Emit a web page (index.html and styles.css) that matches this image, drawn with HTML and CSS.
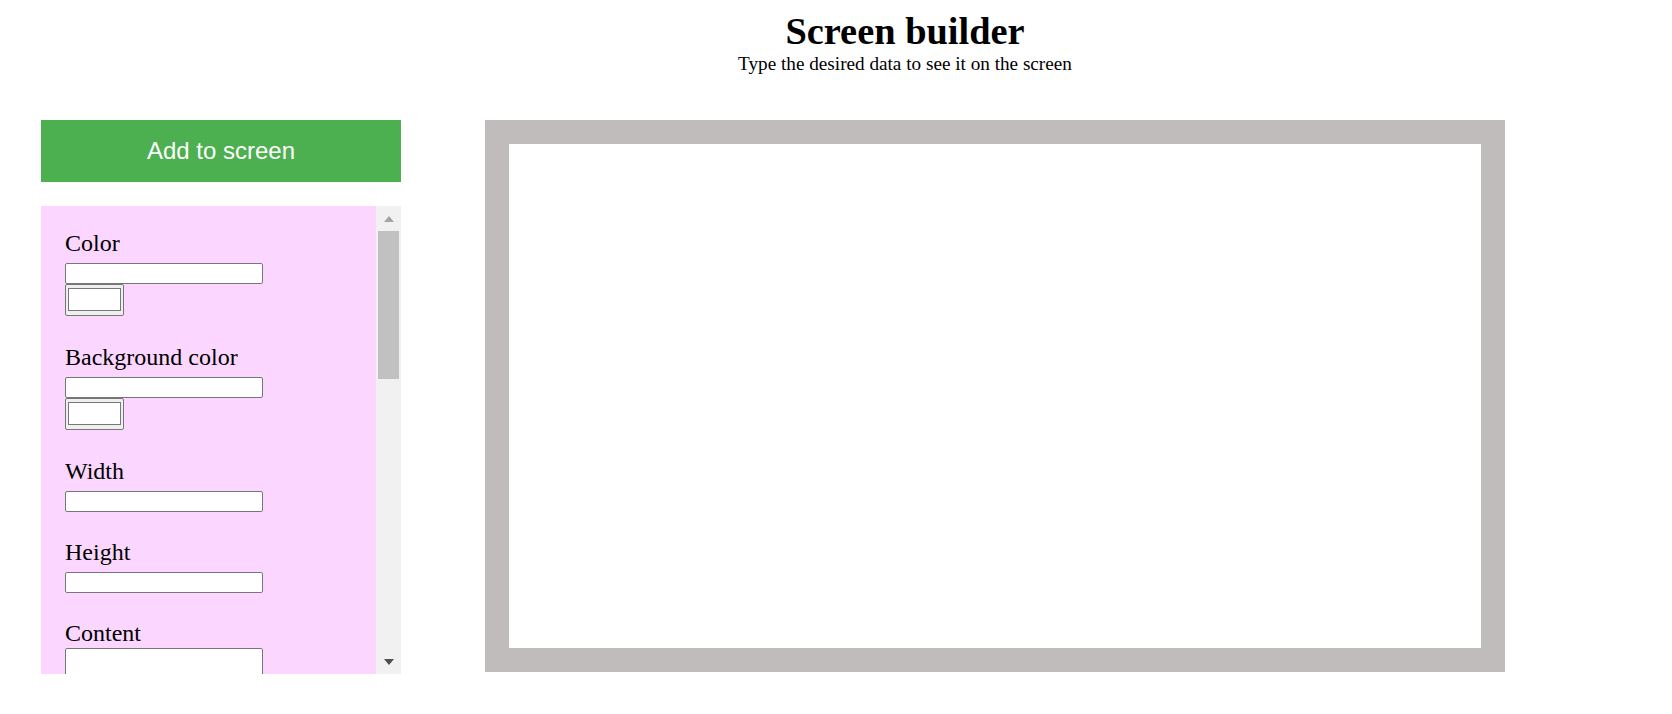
FILE: index.html
```html
<!DOCTYPE html>
<html lang="en">
<head>
<meta charset="utf-8">
<title>Screen builder</title>
<link rel="stylesheet" href="styles.css">
</head>
<body>
<header class="header">
  <h1 class="title">Screen builder</h1>
  <p class="subtitle">Type the desired data to see it on the screen</p>
</header>
<main class="main">
  <section class="controls">
    <button class="add-btn" type="button">Add to screen</button>
    <div class="panel">
      <div class="panel-content">
        <div class="field">
          <label class="field-label">Color</label>
          <input class="text-input" type="text">
          <input class="color-input" type="color" value="#ffffff">
        </div>
        <div class="field">
          <label class="field-label">Background color</label>
          <input class="text-input" type="text">
          <input class="color-input" type="color" value="#ffffff">
        </div>
        <div class="field">
          <label class="field-label">Width</label>
          <input class="text-input" type="text">
        </div>
        <div class="field">
          <label class="field-label">Height</label>
          <input class="text-input" type="text">
        </div>
        <div class="field">
          <label class="field-label field-label--tight">Content</label>
          <textarea class="text-area"></textarea>
        </div>
      </div>
      <div class="scrollbar" aria-hidden="true">
        <div class="sb-btn"><span class="arrow-up"></span></div>
        <div class="sb-track"><div class="sb-thumb"></div></div>
        <div class="sb-btn"><span class="arrow-down"></span></div>
      </div>
    </div>
  </section>
  <section class="screen"></section>
</main>
</body>
</html>
```

FILE: styles.css
```css
html, body {
  margin: 0;
  padding: 0;
  background: #ffffff;
}

body {
  font-family: "Liberation Serif", "Times New Roman", serif;
  color: #000000;
  width: 1672px;
  height: 714px;
  overflow: hidden;
}

.header {
  padding-left: 138px;
  padding-top: 9px;
  text-align: center;
}

.title {
  margin: 0;
  font-size: 38.4px;
  line-height: 44px;
  font-weight: bold;
}

.subtitle {
  margin: 0;
  font-size: 19.2px;
  line-height: 22px;
}

.main {
  display: flex;
  align-items: flex-start;
  gap: 84px;
  margin-top: 45px;
  padding-left: 41px;
}

.controls {
  width: 360px;
  display: flex;
  flex-direction: column;
}

.add-btn {
  height: 62px;
  border: none;
  margin: 0;
  padding: 0;
  background: #4caf50;
  color: #ffffff;
  font-family: "Liberation Sans", Arial, sans-serif;
  font-size: 24px;
}

.panel {
  margin-top: 24px;
  height: 468px;
  display: flex;
}

.panel-content {
  flex: 1;
  background: #fbd7ff;
  overflow: hidden;
  padding: 23px 0 0 24px;
  display: flex;
  flex-direction: column;
  gap: 26px;
}

.field {
  display: flex;
  flex-direction: column;
  align-items: flex-start;
}

.field-label {
  display: block;
  font-size: 24px;
  line-height: 28px;
  margin-bottom: 6px;
}

.field-label--tight {
  margin-bottom: 1px;
}

.text-input,
.text-area {
  display: block;
  box-sizing: border-box;
  width: 198px;
  height: 21px;
  margin: 0;
  padding: 0 3px;
  border: 1px solid #767676;
  border-radius: 2px;
  background: #ffffff;
}

.text-area {
  height: 60px;
  resize: none;
}

.color-input {
  -webkit-appearance: none;
  appearance: none;
  display: block;
  box-sizing: border-box;
  width: 59px;
  height: 32px;
  margin: 0 0 1px 0;
  padding: 0;
  border: 1px solid #767676;
  border-radius: 2px;
  background: #efefef;
}

.color-input::-webkit-color-swatch-wrapper {
  padding: 3px 2px 4px 2px;
}

.color-input::-webkit-color-swatch {
  border: 1px solid #777777;
  border-radius: 0;
  background: #ffffff;
}

.scrollbar {
  width: 25px;
  background: #f1f1f1;
  display: flex;
  flex-direction: column;
}

.sb-btn {
  height: 25px;
  display: flex;
  align-items: center;
  justify-content: center;
}

.arrow-up {
  width: 0;
  height: 0;
  border-left: 5.5px solid transparent;
  border-right: 5.5px solid transparent;
  border-bottom: 6px solid #a3a3a3;
}

.arrow-down {
  width: 0;
  height: 0;
  border-left: 5.5px solid transparent;
  border-right: 5.5px solid transparent;
  border-top: 6px solid #505050;
}

.sb-track {
  flex: 1;
  padding: 0 2px;
}

.sb-thumb {
  height: 148px;
  background: #c1c1c1;
}

.screen {
  box-sizing: border-box;
  width: 1020px;
  height: 552px;
  border: 24px solid #c0bcbb;
  background: #ffffff;
}
```
